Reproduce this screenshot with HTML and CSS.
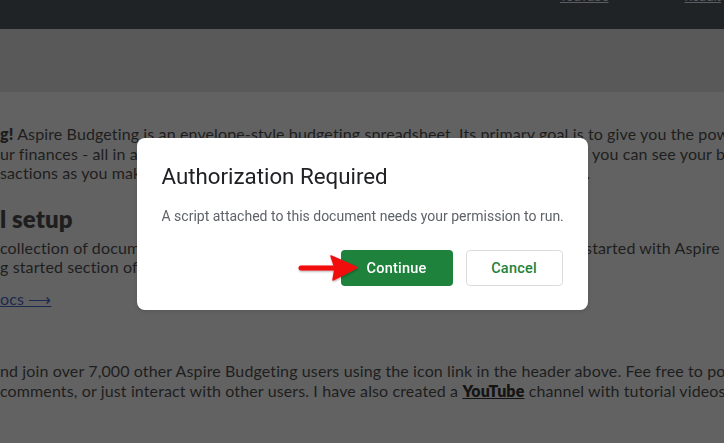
FILE: index.html
```html
<!DOCTYPE html>
<html>
<head>
<meta charset="utf-8">
<link rel="stylesheet" href="styles.css">
</head>
<body>
<div class="page">
  <header class="topbar">
    <nav class="toplinks">
      <a class="toplink yt">YouTube</a>
      <a class="toplink rd">Reddit</a>
    </nav>
  </header>
  <div class="band"></div>
  <main class="content">
    <div class="para first">
      <div class="line"><b>g!</b> Aspire Budgeting is an envelope-style budgeting spreadsheet. Its primary goal is to give you the power</div>
      <div class="line">ur finances - all in a single spreadsheet, that is really, truly easy to use. With Aspire, you can see your budget</div>
      <div class="line">sactions as you make them, and see precisely where every dollar goes every month.</div>
    </div>
    <h2 class="heading">l setup</h2>
    <div class="para">
      <div class="line"> collection of documents, and guides that will help you get up and running, and get started with Aspire</div>
      <div class="line">g started section of the documentation to get going.</div>
    </div>
    <div class="para docs"><a class="doclink">ocs ⟶</a></div>
    <div class="para community">
      <div class="line">nd join over 7,000 other Aspire Budgeting users using the icon link in the header above. Fee free to post</div>
      <div class="line">comments, or just interact with other users. I have also created a <a class="yt-link">YouTube</a> channel with tutorial videos</div>
    </div>
  </main>
</div>

<div class="overlay">
  <div class="dialog">
    <h1 class="dialog-title">Authorization Required</h1>
    <p class="dialog-text">A script attached to this document needs your permission to run.</p>
    <div class="dialog-actions">
      <button class="btn btn-primary">
        Continue
        <svg class="arrow" width="62" height="28" viewBox="0 0 62 28">
          <defs>
            <filter id="sh" x="-20%" y="-30%" width="140%" height="160%">
              <feDropShadow dx="0.5" dy="1" stdDeviation="1" flood-color="#000" flood-opacity="0.35"/>
            </filter>
          </defs>
          <g filter="url(#sh)">
            <line x1="3" y1="13" x2="40" y2="13" stroke="#f20c0c" stroke-width="5" stroke-linecap="round"/>
            <path d="M33 1 L59 12.5 L35 25 L37 13 Z" fill="#f20c0c" stroke="#f20c0c" stroke-width="1.5" stroke-linejoin="round"/>
          </g>
        </svg>
      </button>
      <button class="btn btn-secondary">Cancel</button>
    </div>
  </div>
</div>
</body>
</html>
```

FILE: styles.css
```css
* { box-sizing: border-box; }

html, body {
  margin: 0;
  padding: 0;
  width: 724px;
  height: 443px;
  overflow: hidden;
  background: #626262;
}

.page {
  font-family: Lato, "Noto Sans", sans-serif;
  color: #1e1e1e;
}

.topbar {
  height: 29px;
  background: #202326;
  overflow: hidden;
}

.toplinks {
  display: flex;
  margin-top: -9px;
  padding-left: 560px;
  font-family: "Noto Sans", sans-serif;
  font-size: 12px;
  line-height: 12px;
}

.toplink {
  color: #5a5d61;
  text-decoration: underline;
  text-underline-offset: 1px;
}

.toplink.rd {
  margin-left: 76px;
}

.band {
  height: 63px;
  background: #595959;
}

.content {
  padding-top: 32px;
  font-size: 16px;
  line-height: 19.5px;
  letter-spacing: 0.12px;
}

.line {
  white-space: nowrap;
  overflow: hidden;
}

.line b {
  font-weight: 800;
}

.heading {
  margin: 21px 0 0;
  font-size: 24px;
  line-height: 30px;
  font-weight: 800;
  white-space: nowrap;
}

.para {
  margin: 0;
}

.heading + .para {
  margin-top: 4px;
}

.docs {
  margin-top: 12px;
}

.doclink {
  color: #1b2a4e;
  text-decoration: underline;
  white-space: nowrap;
}

.community {
  margin-top: 53px;
}

.yt-link {
  color: #141414;
  font-weight: 800;
  text-decoration: underline;
}

/* dialog */
.overlay {
  position: fixed;
  inset: 0;
  display: flex;
  align-items: center;
  justify-content: center;
  padding-top: 5px;
}

.dialog {
  width: 451px;
  background: #ffffff;
  border-radius: 8px;
  padding: 24px;
  font-family: Roboto, "Noto Sans", sans-serif;
  box-shadow: 0 1px 4px rgba(0,0,0,0.12);
}

.dialog-title {
  margin: 0;
  font-size: 22.3px;
  line-height: 28px;
  font-weight: 400;
  color: #202124;
  padding-left: 1px;
}

.dialog-text {
  margin: 16px 0 0;
  font-size: 14px;
  line-height: 20px;
  color: #5f6368;
  padding-left: 1px;
  white-space: nowrap;
}

.dialog-actions {
  display: flex;
  justify-content: flex-end;
  gap: 13px;
  margin-top: 24px;
  padding-right: 1px;
}

.btn {
  position: relative;
  height: 36px;
  border-radius: 4px;
  font-family: Roboto, "Noto Sans", sans-serif;
  font-size: 14.5px;
  font-weight: 500;
  letter-spacing: 0.2px;
  cursor: pointer;
}

.btn-primary {
  width: 112px;
  background: #1e823c;
  color: #ffffff;
  border: none;
}

.btn-secondary {
  width: 97px;
  background: #ffffff;
  color: #1e823c;
  border: 1px solid #dadce0;
}

.arrow {
  position: absolute;
  left: -43px;
  top: 5px;
  overflow: visible;
}
```
